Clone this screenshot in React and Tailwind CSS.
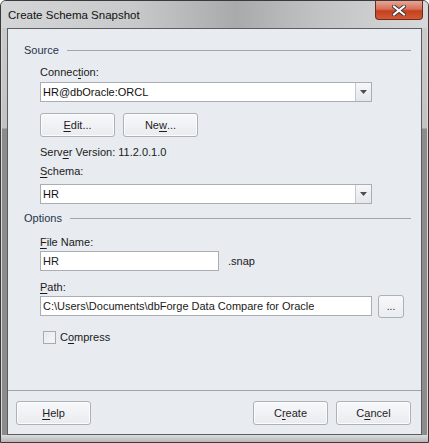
import React from "react";

const F = { fontFamily: '"Liberation Sans", Arial, sans-serif' };

function U({ children }) {
  return <span className="underline underline-offset-[2px] decoration-[1px]">{children}</span>;
}

function Btn({ children, className = "" }) {
  return (
    <div
      className={`h-[24px] w-[75px] flex items-center justify-center rounded-[3px] border border-[#acb0b7] bg-[linear-gradient(to_bottom,#f7f8fa,#e9ecf0)] shadow-[inset_0_0_0_1px_#fbfcfd] text-[#1e1e1e] ${className}`}
    >
      {children}
    </div>
  );
}

function Combo({ value }) {
  return (
    <div className="h-[20px] w-[332px] flex border border-[#a9adb4] bg-white">
      <div className="flex-1 flex items-center pl-[2px] text-[#101010]">{value}</div>
      <div className="w-[16px] flex items-center justify-center border-l border-[#c4c8ce] bg-[linear-gradient(to_bottom,#f6f7f9,#e4e7ec)]">
        <svg width="7" height="4" viewBox="0 0 7 4">
          <path d="M0 0h7L3.5 4z" fill="#4b4f55" />
        </svg>
      </div>
    </div>
  );
}

function Header({ children }) {
  return (
    <div className="h-4 flex items-center">
      <span className="text-[#24354a] pr-[8px]">{children}</span>
      <div className="flex-1 h-px bg-[#a3a6aa] mt-[1px]" />
    </div>
  );
}

export default function App() {
  return (
    <div
      style={F}
      className="w-[429px] h-[443px] flex flex-col border border-[#3a3a3a] rounded-t-[6px] overflow-hidden text-[11px] leading-4 bg-[#c8c8c8] text-[#1a1a1a]"
    >
      {/* title bar */}
      <div className="h-[27px] flex items-start bg-[linear-gradient(to_right,#d4d5d7_0%,#c9cacb_30%,#a9aaab_55%,#c2c3c4_75%,#d7d8d9_100%)]">
        <div className="pl-[7px] pt-[6px] text-[11.5px] text-[#101010]">Create Schema Snapshot</div>
        <div className="ml-auto mr-[5px] w-[48px] h-[19px] rounded-b-[4px] border border-t-0 border-[#6e2a1e] bg-[linear-gradient(to_bottom,#e9a594_0%,#d6705a_45%,#c4401f_55%,#d15a35_100%)] flex items-center justify-center">
          <svg width="14" height="11" viewBox="0 0 14 11">
            <path d="M2 1.5L12 9.5M12 1.5L2 9.5" stroke="#3b3b3b" strokeWidth="4" strokeLinecap="square" />
            <path d="M2 1.5L12 9.5M12 1.5L2 9.5" stroke="#ffffff" strokeWidth="2" strokeLinecap="square" />
          </svg>
        </div>
      </div>

      <div className="flex-1 flex">
        {/* left frame */}
        <div className="w-[6px] bg-[linear-gradient(to_bottom,#cbcbcb_0px,#c3c3c3_100px,#8c8c8c_101px,#8c8c8c_100%)] border-l border-[#d9d9d9]" />
        {/* content */}
        <div className="flex-1 flex flex-col border border-[#5a5d62] bg-[#e8ebf0]">
          <div className="flex-1 pl-[16px] pr-[10px] pt-[13px]">
            <Header>Source</Header>
            <div className="pl-[16px]">
              <div className="mt-[6px] h-4 flex items-center">Connec<U>t</U>ion:</div>
              <div className="mt-[2px]"><Combo value="HR@dbOracle:ORCL" /></div>
              <div className="mt-[11px] flex gap-[8px]">
                <Btn><U>E</U>dit...</Btn>
                <Btn>Ne<U>w</U>...</Btn>
              </div>
              <div className="mt-[7px] h-4 flex items-center">Serv<U>e</U>r Version: 11.2.0.1.0</div>
              <div className="mt-[3px] h-4 flex items-center"><U>S</U>chema:</div>
              <div className="mt-[5px]"><Combo value="HR" /></div>
            </div>
            <div className="mt-[6px]"><Header>Options</Header></div>
            <div className="pl-[16px]">
              <div className="mt-[8px] h-4 flex items-center"><U>F</U>ile Name:</div>
              <div className="mt-[1px] flex items-center">
                <div className="h-[20px] w-[179px] border border-[#a9adb4] bg-white flex items-center pl-[2px]">HR</div>
                <span className="ml-[9px]">.snap</span>
              </div>
              <div className="mt-[8px] h-4 flex items-center"><U>P</U>ath:</div>
              <div className="flex items-start">
                <div className="mt-[1px] h-[20px] w-[332px] border border-[#a9adb4] bg-white flex items-center pl-[2px] whitespace-nowrap overflow-hidden">
                  C:\Users\Documents\dbForge Data Compare for Oracle
                </div>
                <div className="ml-[6px] h-[23px] w-[26px] rounded-[3px] border border-[#acb0b7] bg-[linear-gradient(to_bottom,#f7f8fa,#e9ecf0)] flex items-end justify-center pb-[5px] text-[10px] leading-none">...</div>
              </div>
              <div className="mt-[11px] h-4 flex items-center pl-[3px]">
                <div className="w-[13px] h-[13px] border border-[#a6aab1] bg-[linear-gradient(135deg,#e4e6ea,#f7f8fa)] shadow-[inset_0_0_0_1px_#eef0f3]" />
                <span className="ml-[4px]">C<U>o</U>mpress</span>
              </div>
            </div>
          </div>
          <div className="h-px bg-[#a0a3a8]" />
          <div className="h-[43px] flex items-start pt-[10px] pl-[8px] pr-[10px]">
            <Btn><U>H</U>elp</Btn>
            <Btn className="ml-auto">C<U>r</U>eate</Btn>
            <Btn className="ml-[8px]">C<U>a</U>ncel</Btn>
          </div>
        </div>
        {/* right frame */}
        <div className="w-[6px] bg-[linear-gradient(to_bottom,#cbcbcb_0px,#c3c3c3_100px,#8c8c8c_101px,#8c8c8c_100%)] border-r border-[#d9d9d9]" />
      </div>
      <div className="h-[7px] bg-[linear-gradient(to_bottom,#dcdcdc,#b8b8b8)]" />
    </div>
  );
}
